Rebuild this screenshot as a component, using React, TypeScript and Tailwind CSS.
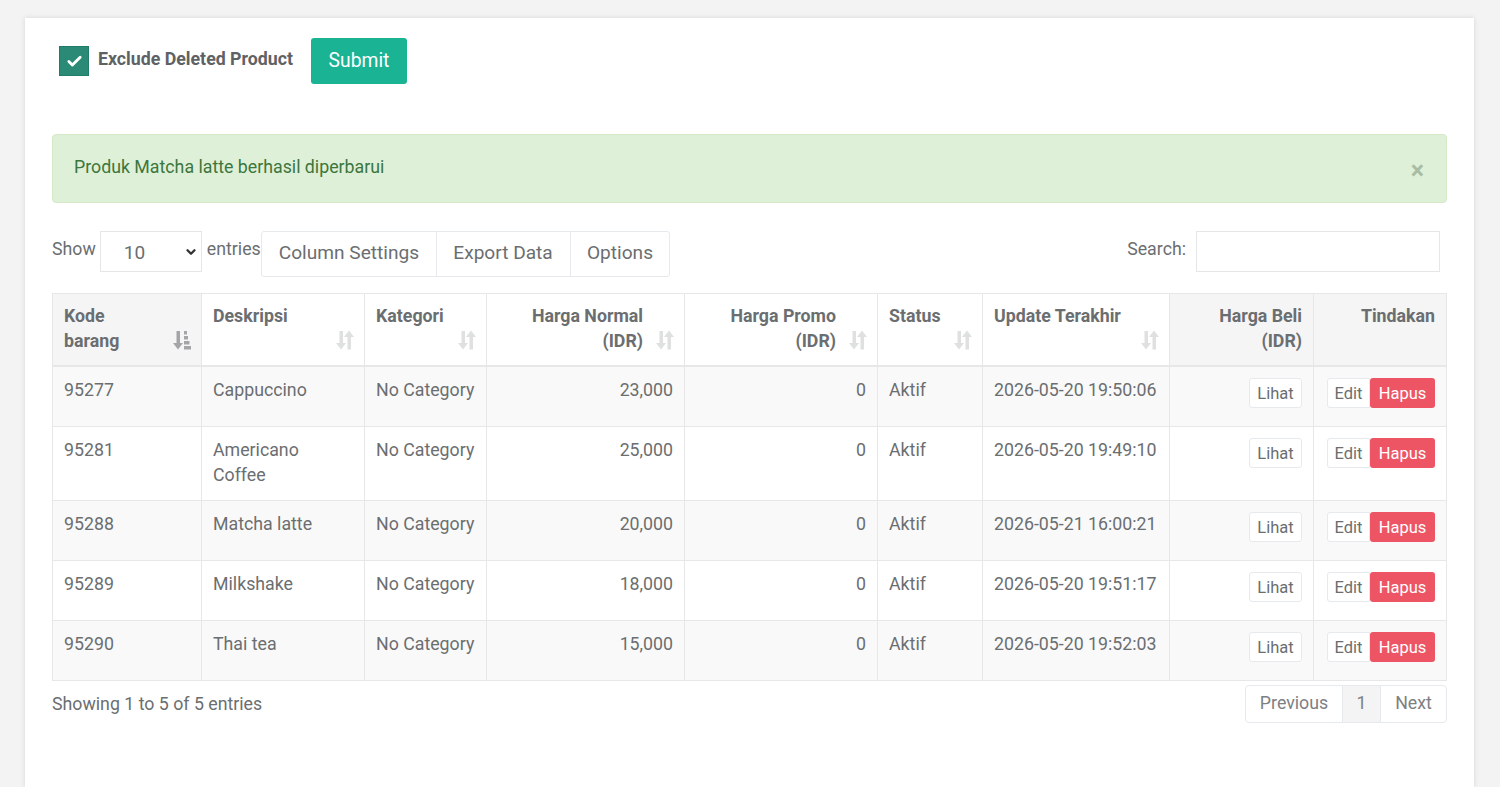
import { Check, ChevronDown } from "lucide-react";

const rows = [
  { kode: "95277", desc: ["Cappuccino"], normal: "23,000", update: "2026-05-20 19:50:06", h: "h-[61px]" },
  { kode: "95281", desc: ["Americano", "Coffee"], normal: "25,000", update: "2026-05-20 19:49:10", h: "h-[74px]" },
  { kode: "95288", desc: ["Matcha latte"], normal: "20,000", update: "2026-05-21 16:00:21", h: "h-[60px]" },
  { kode: "95289", desc: ["Milkshake"], normal: "18,000", update: "2026-05-20 19:51:17", h: "h-[60px]" },
  { kode: "95290", desc: ["Thai tea"], normal: "15,000", update: "2026-05-20 19:52:03", h: "h-[60px]" },
];

const SortIcon = () => (
  <svg viewBox="0 0 18 20" className="absolute right-[10px] bottom-[15px] w-[18px] h-[20px] text-[#dfe0e0]" fill="currentColor">
    <path d="M3.500 1h3.500v12h3l-5 6.500L0 13h3.500z" />
    <path d="M11.500 19.500H15V7h3l-5-6.500L8 7h3.500z" />
  </svg>
);

const SortedIcon = () => (
  <svg viewBox="0 0 18 20" className="absolute right-[10px] bottom-[15px] w-[18px] h-[20px] text-[#a3a5a6]" fill="currentColor">
    <path d="M3.500 1h3.500v12h3l-5 6.500L0 13h3.500z" />
    <path d="M11 1h3v3.500h-3zM11 6h4v3.500h-4zM11 11h5.500v3.500H11zM11 16h7v3.500h-7z" />
  </svg>
);

const Th = ({ children, sort, right, plain, w }: any) => (
  <th
    className={`relative align-top border border-[#e7e7e7] border-b-2 px-[11px] pt-[10px] font-bold leading-[25px] ${w} ${right ? "text-right" : "text-left"} ${plain ? "bg-[#f5f5f6]" : ""} ${right && sort ? "pr-[41px]" : ""}`}
  >
    {children}
    {sort === "on" ? <SortedIcon /> : sort ? <SortIcon /> : null}
  </th>
);

const Td = ({ children, right }: any) => (
  <td className={`align-top border border-[#e7e7e7] px-[11px] pt-[11px] leading-[25px] ${right ? "text-right" : ""}`}>
    {children}
  </td>
);

export default function App() {
  return (
    <div className="h-[787px] overflow-hidden bg-[#f3f3f4] pl-[25px] pr-[26px] pt-[18px] font-['Roboto',sans-serif] text-[17.750px] text-[#6b6e70]">
      <div className="h-[769px] bg-white px-[27px] pt-[20px] shadow-[0_0_5px_rgba(0,0,0,0.12)]">
        <div className="flex items-start h-[96px] pl-[7px]">
          <div className="mt-[8px] w-[30px] h-[30px] bg-[#2a8a75] border border-[#1f7d69] flex items-center justify-center">
            <Check className="text-white w-[17px] h-[17px]" strokeWidth={4} />
          </div>
          <span className="ml-[9px] mt-[8px] font-bold leading-[26px] text-[#5f6264] w-[213px] whitespace-nowrap">Exclude Deleted Product</span>
          <button className="h-[46px] w-[96px] rounded-[3px] bg-[#1ab394] text-white text-[19.300px]">Submit</button>
        </div>

        <div className="h-[69px] rounded-[4px] bg-[#dff0d8] border border-[#d6e9c6] pl-[21px] pr-[22px] flex items-start justify-between text-[#3c763d]">
          <span className="mt-[19px] leading-[26px]">Produk Matcha latte berhasil diperbarui</span>
          <span className="mt-[23px] text-[#a9bda5] text-[25px] font-bold leading-[26px]">×</span>
        </div>

        <div className="mt-[28px] flex items-start h-[62px]">
          <span className="mt-[5px] leading-[26px]">Show</span>
          <div className="ml-[4px] w-[102px] h-[41px] border border-[#e5e6e7] flex items-center justify-between pl-[23px] pr-[3px] text-[19px]">
            <span className="mt-[3px]">10</span>
            <ChevronDown className="w-[14px] h-[14px] text-[#333]" strokeWidth={4} />
          </div>
          <span className="ml-[5px] mt-[5px] leading-[26px] w-[54px] whitespace-nowrap">entries</span>
          <div className="flex h-[46px] border border-[#e7eaec] rounded-[3px] text-[19.100px] leading-[41px] whitespace-nowrap">
            <span className="px-[17px] border-r border-[#e7eaec]">Column Settings</span>
            <span className="w-[134px] pr-[1px] text-center border-r border-[#e7eaec]">Export Data</span>
            <span className="w-[98px] text-center">Options</span>
          </div>
          <div className="ml-auto flex items-start">
            <span className="mt-[5px] leading-[26px]">Search:</span>
            <div className="ml-[10px] mr-[7px] w-[244px] h-[41px] border border-[#e5e6e7]" />
          </div>
        </div>

        <table className="table-fixed border-collapse w-[1394px]">
          <thead>
            <tr className="h-[72px]">
              <Th sort="on" plain w="w-[149px]">Kode<br />barang</Th>
              <Th sort w="w-[163px]">Deskripsi</Th>
              <Th sort w="w-[122px]">Kategori</Th>
              <Th sort right w="w-[198px]">Harga Normal<br />(IDR)</Th>
              <Th sort right w="w-[193px]">Harga Promo<br />(IDR)</Th>
              <Th sort w="w-[105px]">Status</Th>
              <Th sort w="w-[187px]">Update Terakhir</Th>
              <Th right plain w="w-[144px]">Harga Beli<br />(IDR)</Th>
              <Th right plain w="w-[133px]">Tindakan</Th>
            </tr>
          </thead>
          <tbody>
            {rows.map((r, i) => (
              <tr key={r.kode} className={`${r.h} ${i % 2 === 0 ? "bg-[#f9f9f9]" : "bg-white"}`}>
                <Td>{r.kode}</Td>
                <Td>{r.desc.map((d) => <div key={d}>{d}</div>)}</Td>
                <Td><span className="whitespace-nowrap">No Category</span></Td>
                <Td right>{r.normal}</Td>
                <Td right>0</Td>
                <Td>Aktif</Td>
                <Td><span className="whitespace-nowrap">{r.update}</span></Td>
                <Td right>
                  <span className="inline-block w-[53px] h-[30px] bg-white border border-[#e7eaec] rounded-[3px] text-center text-[16.500px] leading-[29px]">Lihat</span>
                </Td>
                <Td right>
                  <span className="inline-flex h-[30px] text-[16.500px] leading-[29px] align-top">
                    <span className="w-[43px] bg-white border border-[#e7eaec] rounded-l-[3px] text-center">Edit</span>
                    <span className="w-[65px] bg-[#ed5565] text-white rounded-[3px] text-center leading-[31px]">Hapus</span>
                  </span>
                </Td>
              </tr>
            ))}
          </tbody>
        </table>

        <div className="mt-[4px] flex items-start justify-between">
          <span className="mt-[6px] leading-[26px]">Showing 1 to 5 of 5 entries</span>
          <div className="flex h-[38px] border border-[#e7eaec] rounded-[4px] leading-[35px] text-[#7d8083]">
            <span className="w-[97px] text-center border-r border-[#e7eaec]">Previous</span>
            <span className="w-[38px] text-center border-r border-[#e7eaec] bg-[#f4f4f4]">1</span>
            <span className="w-[65px] text-center">Next</span>
          </div>
        </div>
      </div>
    </div>
  );
}
